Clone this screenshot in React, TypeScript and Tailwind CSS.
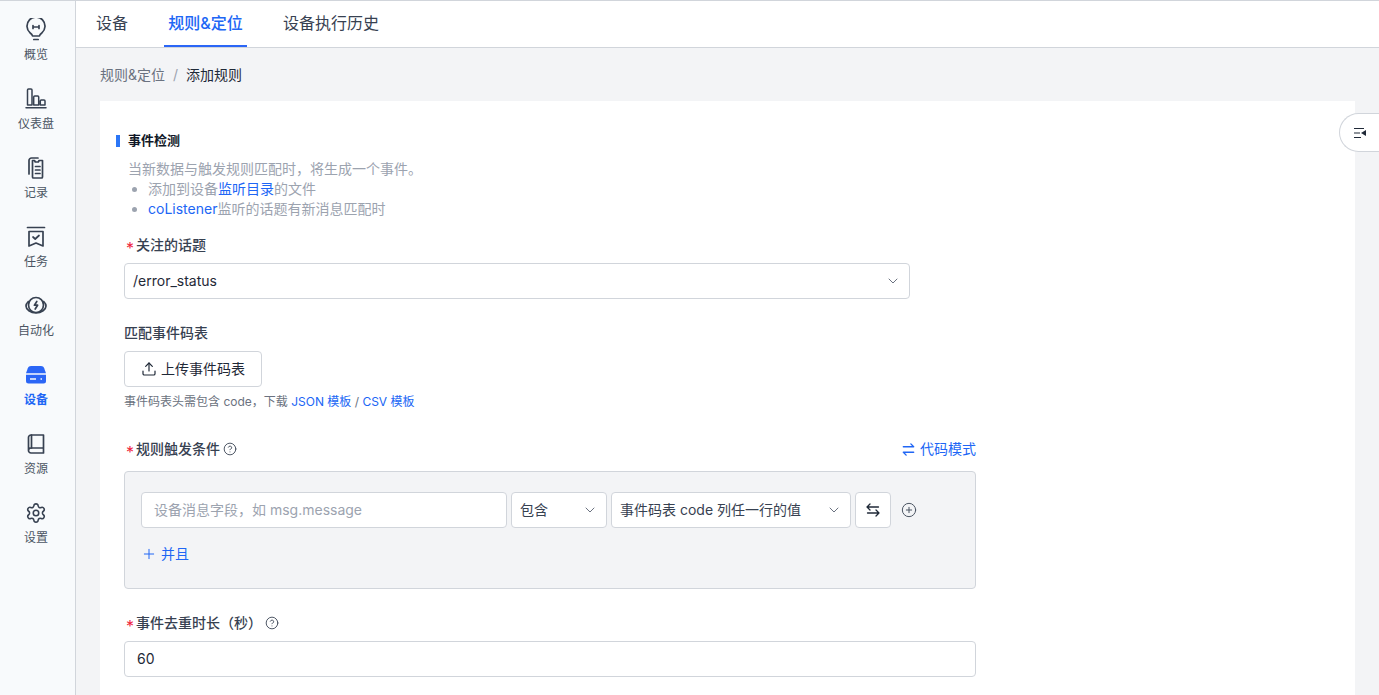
import React from 'react'
import { ChevronDown, CirclePlus, CircleHelp, Plus, Settings, Upload } from 'lucide-react'

const stroke = { fill: 'none', stroke: 'currentColor', strokeWidth: 1.7, strokeLinecap: 'round', strokeLinejoin: 'round' } as const

const BulbIcon = () => (
    <svg viewBox="0 0 24 24" className="w-6 h-6" {...stroke}>
        <path d="M8.500 18c-.2-1.400-1-2-2.400-3.100a9 9 0 1 1 11.800 0C16.500 16 15.700 16.600 15.500 18z" />
        <path d="M9.800 21.500h4.400" />
        <path d="M9 7.500v3M15 7.500v3M9 9h6" />
    </svg>
)

const ChartIcon = () => (
    <svg viewBox="0 0 24 24" className="w-6 h-6" {...stroke} strokeWidth={1.500}>
        <path d="M2 20.700h20" />
        <path d="M3.500 18V3a1 1 0 0 1 1-1h2.500a1 1 0 0 1 1 1v15zM9.700 18V10a1 1 0 0 1 1-1h3a1 1 0 0 1 1 1v8zM16.300 18v-4a1 1 0 0 1 1-1h2.700a1 1 0 0 1 1 1v4z" />
    </svg>
)

const RecordIcon = () => (
    <svg viewBox="0 0 24 24" className="w-6 h-6" {...stroke}>
        <path d="M5 18V4.500A2.500 2.500 0 0 1 7.500 2H14" />
        <path d="M8.500 4.500h2l.8 1.500h3l.8-1.500h3.400v16.500a1 1 0 0 1-1 1h-8a1 1 0 0 1-1-1z" />
        <path d="M11.500 10.500h4.500M11.500 14h4.500M11.500 17.500h4.500" />
    </svg>
)

const TaskIcon = () => (
    <svg viewBox="0 0 24 24" className="w-6 h-6" {...stroke}>
        <path d="M3.500 2.500h17" />
        <path d="M5 6.500h14v14.500l-7-3-7 3z" />
        <path d="M9 12l2.200 2 3.800-3.500" />
    </svg>
)

const AutoIcon = () => (
    <svg viewBox="0 0 24 24" className="w-6 h-6" {...stroke}>
        <circle cx="12" cy="11" r="7.500" />
        <path d="M12.800 7.500l-2.400 3.700h3.200L11.200 15" />
        <path d="M4.300 7.500C2.800 9 2 10.500 2 12c0 3.500 4.500 7 10 7s10-3.500 10-7c0-1.500-.8-3-2.300-4.500" />
    </svg>
)

const DeviceIcon = () => (
    <svg viewBox="0 0 24 24" className="w-6 h-6" fill="currentColor">
        <path d="M7 3h10c1.500 0 2.600.8 3.200 2.200L22 10.300H2l1.800-5.100C4.400 3.800 5.500 3 7 3z" />
        <path d="M2 11.700h20V18a2.500 2.500 0 0 1-2.500 2.500h-15A2.500 2.500 0 0 1 2 18z" />
        <path d="M6 15.200h6v1.500H6zM16.500 15.200h1.500v1.500h-1.500z" fill="#f8fafc" />
    </svg>
)

const BookIcon = () => (
    <svg viewBox="0 0 24 24" className="w-6 h-6" {...stroke}>
        <path d="M4.500 18.500V5.500A2.500 2.500 0 0 1 7 3h12.500v18H7a2.500 2.500 0 0 1 0-5h12.500" />
        <path d="M7.500 3v13" />
    </svg>
)

const SwapIcon = ({ className }: { className?: string }) => (
    <svg viewBox="0 0 16 16" className={className} fill="none" stroke="currentColor" strokeWidth="1.500" strokeLinecap="round" strokeLinejoin="round">
        <path d="M2.500 5h11M10.500 2l3 3" />
        <path d="M13.500 11h-11M5.500 14l-3-3" />
    </svg>
)

const FlipIcon = () => (
    <svg viewBox="0 0 16 16" className="w-4 h-4" fill="none" stroke="currentColor" strokeWidth="1.300" strokeLinecap="round" strokeLinejoin="round">
        <path d="M2 5h11.500M5 2L2 5l3 3" />
        <path d="M14 11H2.500M11 8l3 3-3 3" />
    </svg>
)

const navItems = [
    { label: '概览', icon: <BulbIcon /> },
    { label: '仪表盘', icon: <ChartIcon /> },
    { label: '记录', icon: <RecordIcon /> },
    { label: '任务', icon: <TaskIcon /> },
    { label: '自动化', icon: <AutoIcon /> },
    { label: '设备', icon: <DeviceIcon />, active: true },
    { label: '资源', icon: <BookIcon /> },
    { label: '设置', icon: <Settings className="w-[22px] h-[22px]" strokeWidth={1.700} /> },
]

const Sidebar = () => (
    <div className="w-[76px] shrink-0 h-full bg-[#f8fafc] border-r border-[#d1d5db] pt-[15px] pr-[3px] flex flex-col items-center">
        {navItems.map((item) => (
            <div
                key={item.label}
                className={`h-[69px] w-full shrink-0 flex flex-col items-center ${item.active ? 'text-[#2066f5]' : 'text-[#4b5563]'}`}
            >
                <div className={`h-[30px] pb-[3px] flex items-center justify-center ${item.active ? 'text-[#2b66f6]' : 'text-[#374151]'}`}>
                    {item.icon}
                </div>
                <div className={`text-xs leading-[18px] ${item.active ? 'font-semibold' : ''}`}>{item.label}</div>
            </div>
        ))}
    </div>
)

const Label = ({ children, required }: { children: React.ReactNode; required?: boolean }) => (
    <div className="flex items-center h-5 text-sm text-[#374151] font-medium">
        {required && <span className="w-3 h-5 pl-[2px] pt-[3px] text-[#ef1f3f] text-base leading-5 font-normal">*</span>}
        {children}
    </div>
)

const Help = () => <CircleHelp className="w-[14px] h-[14px] ml-[3px] text-[#374151]" strokeWidth={1.500} />

const App = () => {
    return (
        <div
            className="w-[1379px] h-[695px] overflow-hidden flex border-t border-[#d1d5db] bg-[#f3f4f6] text-[#111827]"
            style={{ fontFamily: 'Inter, "Noto Sans CJK SC", sans-serif' }}
        >
            <Sidebar />
            <div className="flex-1 min-w-0 flex flex-col relative">
                {/* Tabs */}
                <div className="h-[47px] shrink-0 bg-white border-b border-[#d1d5db] flex pl-4 text-base text-[#374151]">
                    <div className="w-10 pb-[2px] flex items-center justify-center h-[46px]">设备</div>
                    <div className="ml-8 w-[83px] flex items-center justify-center h-[46px] text-[#2066f5] font-medium border-b-2 border-[#2b66f6]">规则&amp;定位</div>
                    <div className="ml-8 px-1 pb-[2px] flex items-center h-[46px]">设备执行历史</div>
                </div>

                {/* Breadcrumb */}
                <div className="h-[53px] shrink-0 pl-6 flex items-center text-sm">
                    <span className="text-[#6b7280]">规则&amp;定位</span>
                    <span className="mx-2 text-[#9ca3af]">/</span>
                    <span className="text-[#1f2937]">添加规则</span>
                </div>

                {/* Card */}
                <div className="mx-6 flex-1 bg-white pt-[30px] pl-4">
                    <div className="flex items-center h-5">
                        <span className="w-1 h-3 bg-[#2b76f6] mr-2" />
                        <span className="text-[13px] font-semibold text-[#111827]">事件检测</span>
                    </div>
                    <div className="mt-2 pl-3 text-sm leading-5 text-[#9ca3af]">
                        <div>当新数据与触发规则匹配时，将生成一个事件。</div>
                        <ul className="list-disc pl-5">
                            <li>添加到设备<span className="text-[#2066f5]">监听目录</span>的文件</li>
                            <li><span className="text-[#2066f5]">coListener</span>监听的话题有新消息匹配时</li>
                        </ul>
                    </div>

                    <div className="mt-4 ml-2"><Label required>关注的话题</Label></div>
                    <div className="mt-2 ml-2 w-[786px] h-9 border border-[#d1d5db] rounded flex items-center justify-between pl-2 pr-2 text-sm bg-white text-[#1f2937]">
                        <span>/error_status</span>
                        <ChevronDown className="w-4 h-4 text-[#6b7280]" strokeWidth={1.500} />
                    </div>

                    <div className="mt-6 ml-2"><Label>匹配事件码表</Label></div>
                    <div className="mt-2 ml-2 w-[138px] h-9 border border-[#d1d5db] rounded flex items-center justify-center text-sm text-[#1f2937]">
                        <Upload className="w-4 h-4 mr-[4px]" strokeWidth={1.800} />
                        上传事件码表
                    </div>
                    <div className="mt-[6px] ml-2 text-xs leading-[18px] text-[#6b7280]">
                        事件码表头需包含 code，下载 <span className="text-[#2066f5]">JSON 模板</span> / <span className="text-[#2066f5]">CSV 模板</span>
                    </div>

                    <div className="mt-7 ml-2 w-[852px] flex items-center justify-between">
                        <Label required>规则触发条件<Help /></Label>
                        <div className="flex items-center text-sm text-[#2066f5]">
                            <SwapIcon className="w-[15px] h-[15px] mr-[4px]" />
                            代码模式
                        </div>
                    </div>
                    <div className="mt-3 ml-2 w-[852px] h-[118px] bg-[#f3f4f6] border border-[#d1d5db] rounded pt-5 pl-4">
                        <div className="flex items-center gap-1 text-sm">
                            <div className="w-[366px] h-9 bg-white border border-[#d1d5db] rounded pl-3 flex items-center text-[#9ca3af]">设备消息字段，如 msg.message</div>
                            <div className="w-[96px] h-9 bg-white border border-[#d1d5db] rounded px-2 flex items-center justify-between text-[#374151]">
                                包含
                                <ChevronDown className="w-4 h-4 text-[#6b7280]" strokeWidth={1.500} />
                            </div>
                            <div className="w-[240px] h-9 bg-white border border-[#d1d5db] rounded px-2 flex items-center justify-between text-[#374151]">
                                事件码表 code 列任一行的值
                                <ChevronDown className="w-4 h-4 text-[#6b7280]" strokeWidth={1.500} />
                            </div>
                            <div className="w-9 h-9 bg-white border border-[#d1d5db] rounded flex items-center justify-center text-[#1f2937]">
                                <FlipIcon />
                            </div>
                            <CirclePlus className="w-4 h-4 ml-[6px] text-[#4b5563]" strokeWidth={1.500} />
                        </div>
                        <div className="mt-4 flex items-center text-sm text-[#2066f5] h-5">
                            <Plus className="w-4 h-4 mr-[4px]" strokeWidth={1.500} />
                            并且
                        </div>
                    </div>

                    <div className="mt-6 ml-2"><Label required>事件去重时长（秒）<Help /></Label></div>
                    <div className="mt-2 ml-2 w-[852px] h-9 border border-[#d1d5db] rounded flex items-center pl-3 text-sm text-[#1f2937]">60</div>
                </div>

                {/* Collapse toggle */}
                <div className="absolute right-0 top-[112px] w-10 h-[39px] bg-white border border-r-0 border-[#d1d5db] rounded-l-[20px] flex items-center justify-center">
                    <svg viewBox="0 0 14 14" className="w-3.5 h-3.5 text-[#1f2937]">
                        <path d="M1 2.500h10M1 7h6M1 11.500h7" stroke="currentColor" strokeWidth="1.200" fill="none" />
                        <path d="M13 4v6L8 7z" fill="currentColor" />
                    </svg>
                </div>
            </div>
        </div>
    )
}

export default App
